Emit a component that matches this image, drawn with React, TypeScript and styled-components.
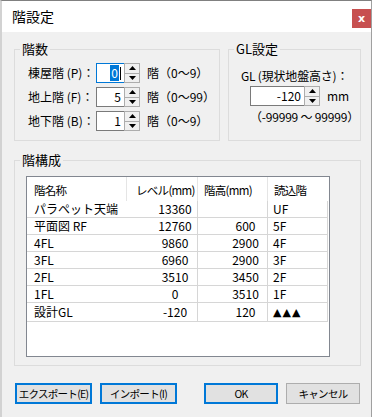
import React from 'react'
import styled, { createGlobalStyle } from 'styled-components'

const GlobalStyle = createGlobalStyle`
  html, body {
    margin: 0;
    padding: 0;
    background: #fff;
  }
  body {
    font-family: "Noto Sans CJK JP", "Noto Sans", sans-serif;
    font-size: 12px;
    color: #000;
  }
`;

// ウィンドウ枠

const Frame = styled.div`
  width: 369px;
  height: 416px;
  border-top: 1px solid #808080;
  border-left: 2px solid #d2d2d2;
  border-right: 1px solid #a0a0a0;
  display: flex;
  flex-direction: column;
  background: #f0f0f0;
`;

const TitleBar = styled.div`
  height: 31px;
  flex-shrink: 0;
  display: flex;
  justify-content: space-between;
  align-items: flex-start;
  padding-left: 10px;
  background: #fff;
`;

const Title = styled.div`
  font-size: 14px;
  line-height: 31px;
`;

const CloseButton = styled.div`
  width: 19px;
  height: 19px;
  margin-top: 8px;
  display: flex;
  align-items: center;
  justify-content: center;
  background: #c75050;
  color: #fff;
  font-family: "DejaVu Sans", sans-serif;
  font-size: 11px;
  font-weight: 700;
  line-height: 1;
`;

const Body = styled.div`
  flex: 1;
  display: flex;
  flex-direction: column;
  padding: 9px 10px 0 12px;
`;

// グループボックス

const TopRow = styled.div`
  display: flex;
  gap: 8px;
`;

const GroupBox = styled.fieldset`
  margin: 0;
  padding: 0;
  min-width: 0;
  box-sizing: border-box;
  border: 1px solid #dcdcdc;
`;

const Legend = styled.legend`
  margin-left: 5px;
  padding: 0 2px;
  font-size: 13px;
  line-height: 16px;
`;

const FloorGroup = styled(GroupBox)`
  width: 206px;
  flex-shrink: 0;
`;

const GlGroup = styled(GroupBox)`
  flex: 1;
`;

const TableGroup = styled(GroupBox)`
  margin-top: 11px;
`;

const FloorBody = styled.div`
  display: flex;
  flex-direction: column;
  gap: 4px;
  padding: 6px 0 9px 13px;
`;

const FieldRow = styled.div`
  display: flex;
  align-items: center;
  height: 20px;
`;

const FieldLabel = styled.span`
  width: 68px;
  flex-shrink: 0;
  line-height: 16px;
  white-space: nowrap;
`;

const Unit = styled.span`
  margin-left: 7px;
  line-height: 16px;
  white-space: nowrap;
`;

// スピンボックス

const SpinField = styled.div`
  display: flex;
  height: 20px;
`;

const TextBox = styled.div<{ $width: number; $focused?: boolean }>`
  width: ${p => p.$width}px;
  box-sizing: border-box;
  border: 1px solid ${p => (p.$focused ? '#0078d7' : '#7a7a7a')};
  border-right: none;
  background: #fff;
  display: flex;
  align-items: center;
  justify-content: flex-end;
  padding-right: 3px;
  line-height: 16px;
`;

const Selected = styled.span`
  background: #0078d7;
  color: #fff;
  padding: 0 1px;
`;

const Caret = styled.span`
  width: 1px;
  height: 13px;
  margin-left: 1px;
  background: #000;
`;

const Spinner = styled.div`
  width: 16px;
  box-sizing: border-box;
  border: 1px solid #adadad;
  display: flex;
  flex-direction: column;
  background: #f0f0f0;
`;

const SpinHalf = styled.div<{ $top?: boolean }>`
  flex: 1;
  display: flex;
  align-items: center;
  justify-content: center;
  border-bottom: ${p => (p.$top ? '1px solid #adadad' : 'none')};
`;

const Arrow = ({ down }: { down?: boolean }) => (
  <svg width="7" height="4" viewBox="0 0 7 4">
    <polygon points={down ? '0,0 7,0 3.5,4' : '3.5,0 7,4 0,4'} fill="#000" />
  </svg>
);

function SpinBox({ value, width, focused }: { value: string; width: number; focused?: boolean }) {
  return (
    <SpinField>
      <TextBox $width={width} $focused={focused}>
        {focused ? (
          <>
            <Selected>{value}</Selected>
            <Caret />
          </>
        ) : (
          value
        )}
      </TextBox>
      <Spinner>
        <SpinHalf $top><Arrow /></SpinHalf>
        <SpinHalf><Arrow down /></SpinHalf>
      </Spinner>
    </SpinField>
  );
}

// GL設定

const GlBody = styled.div`
  padding: 11px 0 14px 12px;
`;

const GlLabel = styled.div`
  line-height: 16px;
  white-space: nowrap;
  letter-spacing: -0.2px;
`;

const GlInputRow = styled.div`
  display: flex;
  align-items: center;
  margin: 2px 0 0 9px;
`;

const GlRange = styled.div`
  margin: 3px 0 0 9px;
  line-height: 16px;
  white-space: nowrap;
  letter-spacing: -0.2px;
`;

// 階構成テーブル

const TableBody = styled.div`
  padding: 8px 0 8px 11px;
`;

const ListView = styled.div`
  width: 304px;
  height: 181px;
  box-sizing: border-box;
  border: 1px solid #828790;
  background: #fff;
`;

const Grid = styled.table`
  border-collapse: separate;
  border-spacing: 0;
  table-layout: fixed;
  width: 301px;
`;

const HeadCell = styled.th<{ $indent: number; $last?: boolean }>`
  height: 24px;
  box-sizing: border-box;
  padding: 2px 0 0 ${p => p.$indent}px;
  text-align: left;
  font-size: 11.5px;
  font-weight: 400;
  letter-spacing: -0.7px;
  line-height: 16px;
  border-right: ${p => (p.$last ? 'none' : '1px solid #e5e5e5')};
  white-space: nowrap;
  overflow: hidden;
`;

const Cell = styled.td<{ $indent: number; $align?: string; $sep?: boolean }>`
  height: 17px;
  box-sizing: border-box;
  padding: 0 0 0 ${p => p.$indent}px;
  text-align: ${p => p.$align || 'left'};
  line-height: 16px;
  border-bottom: 1px solid #d6d6d6;
  border-right: ${p => (p.$sep ? '1px solid #d6d6d6' : 'none')};
  white-space: nowrap;
  overflow: hidden;
`;

const Triangles = styled.span`
  font-family: "DejaVu Sans", sans-serif;
  font-size: 11px;
  letter-spacing: 1px;
`;

// ボタン

const ButtonRow = styled.div`
  display: flex;
  gap: 8px;
  margin-top: 17px;
  padding-left: 1px;
`;

const Button = styled.button<{ $width: number; $primary?: boolean; $push?: number }>`
  width: ${p => p.$width}px;
  height: 21px;
  margin-left: ${p => p.$push || 0}px;
  padding: 0;
  box-sizing: border-box;
  border: ${p => (p.$primary ? '2px solid #0078d7' : '1px solid #adadad')};
  background: #e1e1e1;
  color: #000;
  font-family: "Noto Sans CJK JP", "Noto Sans", sans-serif;
  font-size: 10.5px;
  letter-spacing: -0.7px;
  line-height: 16px;
  white-space: nowrap;
`;

const floors = [
  { label: '棟屋階 (P)：', value: '0', unit: '階（0〜9）', focused: true },
  { label: '地上階 (F)：', value: '5', unit: '階（0〜99）' },
  { label: '地下階 (B)：', value: '1', unit: '階（0〜9）' },
];

const rows = [
  { name: 'パラペット天端', level: '13360', height: '', read: 'UF' },
  { name: '平面図 RF', level: '12760', height: '600', read: '5F' },
  { name: '4FL', level: '9860', height: '2900', read: '4F' },
  { name: '3FL', level: '6960', height: '2900', read: '3F' },
  { name: '2FL', level: '3510', height: '3450', read: '2F' },
  { name: '1FL', level: '0', height: '3510', read: '1F' },
  { name: '設計GL', level: '-120', height: '120', read: '▲▲▲' },
];

function App() {
  return (
    <>
      <GlobalStyle />
      <Frame>
        <TitleBar>
          <Title>階設定</Title>
          <CloseButton>x</CloseButton>
        </TitleBar>
        <Body>
          <TopRow>
            <FloorGroup>
              <Legend>階数</Legend>
              <FloorBody>
                {floors.map(f => (
                  <FieldRow key={f.label}>
                    <FieldLabel>{f.label}</FieldLabel>
                    <SpinBox value={f.value} width={28} focused={f.focused} />
                    <Unit>{f.unit}</Unit>
                  </FieldRow>
                ))}
              </FloorBody>
            </FloorGroup>
            <GlGroup>
              <Legend>GL設定</Legend>
              <GlBody>
                <GlLabel>GL (現状地盤高さ)：</GlLabel>
                <GlInputRow>
                  <SpinBox value="-120" width={54} />
                  <Unit>mm</Unit>
                </GlInputRow>
                <GlRange>（-99999 〜 99999）</GlRange>
              </GlBody>
            </GlGroup>
          </TopRow>

          <TableGroup>
            <Legend>階構成</Legend>
            <TableBody>
              <ListView>
                <Grid>
                  <colgroup>
                    <col style={{ width: 100 }} />
                    <col style={{ width: 71 }} />
                    <col style={{ width: 70 }} />
                    <col style={{ width: 60 }} />
                  </colgroup>
                  <thead>
                    <tr>
                      <HeadCell $indent={7}>階名称</HeadCell>
                      <HeadCell $indent={9}>レベル(mm)</HeadCell>
                      <HeadCell $indent={6}>階高(mm)</HeadCell>
                      <HeadCell $indent={6} $last>読込階</HeadCell>
                    </tr>
                  </thead>
                  <tbody>
                    {rows.map(r => (
                      <tr key={r.name}>
                        <Cell $indent={7}>{r.name}</Cell>
                        <Cell $indent={26} $align="center" $sep>{r.level}</Cell>
                        <Cell $indent={26} $align="center" $sep>{r.height}</Cell>
                        <Cell $indent={5} $sep>
                          {r.read === '▲▲▲' ? <Triangles>{r.read}</Triangles> : r.read}
                        </Cell>
                      </tr>
                    ))}
                  </tbody>
                </Grid>
              </ListView>
            </TableBody>
          </TableGroup>

          <ButtonRow>
            <Button $width={77} $primary>エクスポート(E)</Button>
            <Button $width={77} $primary>インポート(I)</Button>
            <Button $width={74} $primary $push={19}>OK</Button>
            <Button $width={74}>キャンセル</Button>
          </ButtonRow>
        </Body>
      </Frame>
    </>
  )
}

export default App
